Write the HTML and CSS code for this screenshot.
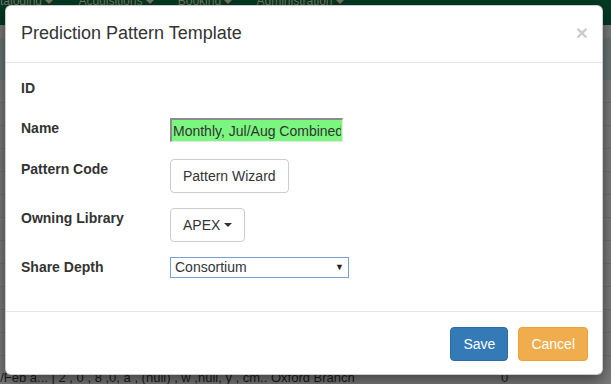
FILE: index.html
```html
<!DOCTYPE html>
<html>
<head>
<meta charset="utf-8">
<link rel="stylesheet" href="styles.css">
</head>
<body>
<div class="page">
  <nav class="navbar">
    <span class="nav-item first">taloging <i class="nav-caret"></i></span>
    <span class="nav-item">Acquisitions <i class="nav-caret"></i></span>
    <span class="nav-item">Booking <i class="nav-caret"></i></span>
    <span class="nav-item">Administration <i class="nav-caret"></i></span>
  </nav>
  <div class="gap-band"></div>
  <div class="band"></div>
  <div class="rows">
    <div class="row-line"></div><div class="row-line"></div><div class="row-line"></div>
    <div class="row-line"></div><div class="row-line"></div><div class="row-line"></div>
    <div class="row-line"></div><div class="row-line"></div><div class="row-line"></div>
    <div class="row-line"></div><div class="row-line"></div><div class="row-line"></div>
    <div class="row-line text-row"><span class="cell-a">n/Feb a... | 2 , 0 , 8 ,0, a , (null) , w ,null, y , cm.. Oxford Branch</span><span class="cell-b">0</span></div>
  </div>
</div>

<div class="modal">
  <div class="modal-header">
    <h4 class="modal-title">Prediction Pattern Template</h4>
    <span class="close">&times;</span>
  </div>
  <div class="modal-body">
    <div class="form-row row-id">
      <label class="form-label">ID</label>
      <div class="form-control-area"></div>
    </div>
    <div class="form-row row-name">
      <label class="form-label">Name</label>
      <input class="name-input" type="text" value="Monthly, Jul/Aug Combined">
    </div>
    <div class="form-row row-code">
      <label class="form-label">Pattern Code</label>
      <button class="btn btn-default">Pattern Wizard</button>
    </div>
    <div class="form-row row-lib">
      <label class="form-label">Owning Library</label>
      <button class="btn btn-default">APEX <i class="caret"></i></button>
    </div>
    <div class="form-row row-depth">
      <label class="form-label">Share Depth</label>
      <div class="select-box"><span>Consortium</span><span class="select-arrow">&#9660;</span></div>
    </div>
  </div>
  <div class="modal-footer">
    <button class="btn btn-primary">Save</button>
    <button class="btn btn-warning">Cancel</button>
  </div>
</div>
</body>
</html>
```

FILE: styles.css
```css
* { box-sizing: border-box; }
html, body { margin: 0; padding: 0; }
body {
  width: 611px;
  height: 384px;
  overflow: hidden;
  font-family: "Liberation Sans", Arial, sans-serif;
  font-size: 14px;
  color: #333;
  background: #7b7b7b;
  position: relative;
}

/* background page (dimmed) */
.page { width: 611px; height: 384px; overflow: hidden; }
.navbar {
  height: 25px;
  background: #003a23;
  display: flex;
  align-items: flex-start;
  overflow: hidden;
}
.nav-item {
  color: #7a7360;
  font-size: 12px;
  line-height: 14px;
  margin-top: -6px;
  margin-right: 24px;
  white-space: nowrap;
}
.nav-item.first { margin-left: 0; margin-right: 25px; }
.nav-caret {
  display: inline-block;
  width: 0; height: 0;
  border-top: 4px solid #7a7360;
  border-left: 4px solid transparent;
  border-right: 4px solid transparent;
  vertical-align: middle;
}
.gap-band { height: 13px; background: #7b7b7b; }
.band { height: 42px; background: #6b7476; }
.rows { display: flex; flex-direction: column; }
.row-line {
  height: 23px;
  border-bottom: 1px solid #6f6f6f;
  flex: none;
}
.text-row {
  height: 28px;
  border-bottom: none;
  position: relative;
  color: #1c1c1c;
  font-size: 13px;
  line-height: 16px;
  padding-top: 14px;
}
.cell-a { margin-left: -7px; white-space: nowrap; }
.cell-b { position: absolute; left: 501px; top: 14px; }

/* modal */
.modal {
  position: absolute;
  left: 5px;
  top: 5px;
  width: 598px;
  height: 370px;
  background: #fff;
  border: 1px solid rgba(0,0,0,.2);
  border-radius: 6px;
  box-shadow: 0 5px 15px rgba(0,0,0,.5);
  display: flex;
  flex-direction: column;
}
.modal-header {
  padding: 15px;
  border-bottom: 1px solid #e5e5e5;
  display: flex;
  justify-content: space-between;
  align-items: flex-start;
}
.modal-title {
  margin: 0;
  font-size: 18px;
  font-weight: normal;
  line-height: 25.7px;
  color: #333;
}
.close {
  font-size: 21px;
  font-weight: bold;
  line-height: 1;
  color: #000;
  opacity: .2;
  margin-top: 1px;
  margin-right: -1px;
}
.modal-body {
  padding: 15px 15px 33px 15px;
  flex: 1;
}
.form-row { display: flex; align-items: flex-start; }
.form-label {
  width: 149px;
  flex: none;
  font-weight: bold;
  line-height: 20px;
  color: #333;
}
.row-id { height: 20px; margin-bottom: 20px; }
.row-name { height: 24px; margin-bottom: 17px; }
.row-code { height: 34px; margin-bottom: 15px; }
.row-lib { height: 34px; margin-bottom: 15px; }
.row-depth { height: 21px; }

.name-input {
  width: 173px;
  height: 24px;
  margin: 0;
  padding: 1px 1px 0 1px;
  background: #7af77f;
  border-top: 2px solid #8c8c8c;
  border-left: 2px solid #8c8c8c;
  border-right: 1px solid #e8e8e8;
  border-bottom: 1px solid #e8e8e8;
  font-family: "Liberation Sans", Arial, sans-serif;
  font-size: 14px;
  color: #333;
  outline: none;
}

.btn {
  display: inline-flex;
  align-items: center;
  height: 34px;
  padding: 6px 12px;
  font-family: "Liberation Sans", Arial, sans-serif;
  font-size: 14px;
  line-height: 20px;
  border: 1px solid transparent;
  border-radius: 4px;
  background: #fff;
  margin: 0;
  white-space: nowrap;
}
.btn-default { color: #333; border-color: #ccc; background: #fff; }
.btn-primary { color: #fff; background: #337ab7; border-color: #2e6da4; }
.btn-warning { color: #fff; background: #f0ad4e; border-color: #eea236; }
.caret {
  display: inline-block;
  width: 0; height: 0;
  margin-left: 4px;
  border-top: 4px solid #333;
  border-left: 4px solid transparent;
  border-right: 4px solid transparent;
}

.select-box {
  width: 179px;
  height: 21px;
  border: 1px solid #7a9fd6;
  display: flex;
  justify-content: space-between;
  align-items: center;
  padding: 0 4px 0 4px;
  font-size: 14px;
  color: #333;
  background: #fff;
}
.select-arrow { font-size: 9px; color: #222; }

.modal-footer {
  padding: 15px 14px 15px 15px;
  border-top: 1px solid #e5e5e5;
  display: flex;
  justify-content: flex-end;
  gap: 10px;
}
```
